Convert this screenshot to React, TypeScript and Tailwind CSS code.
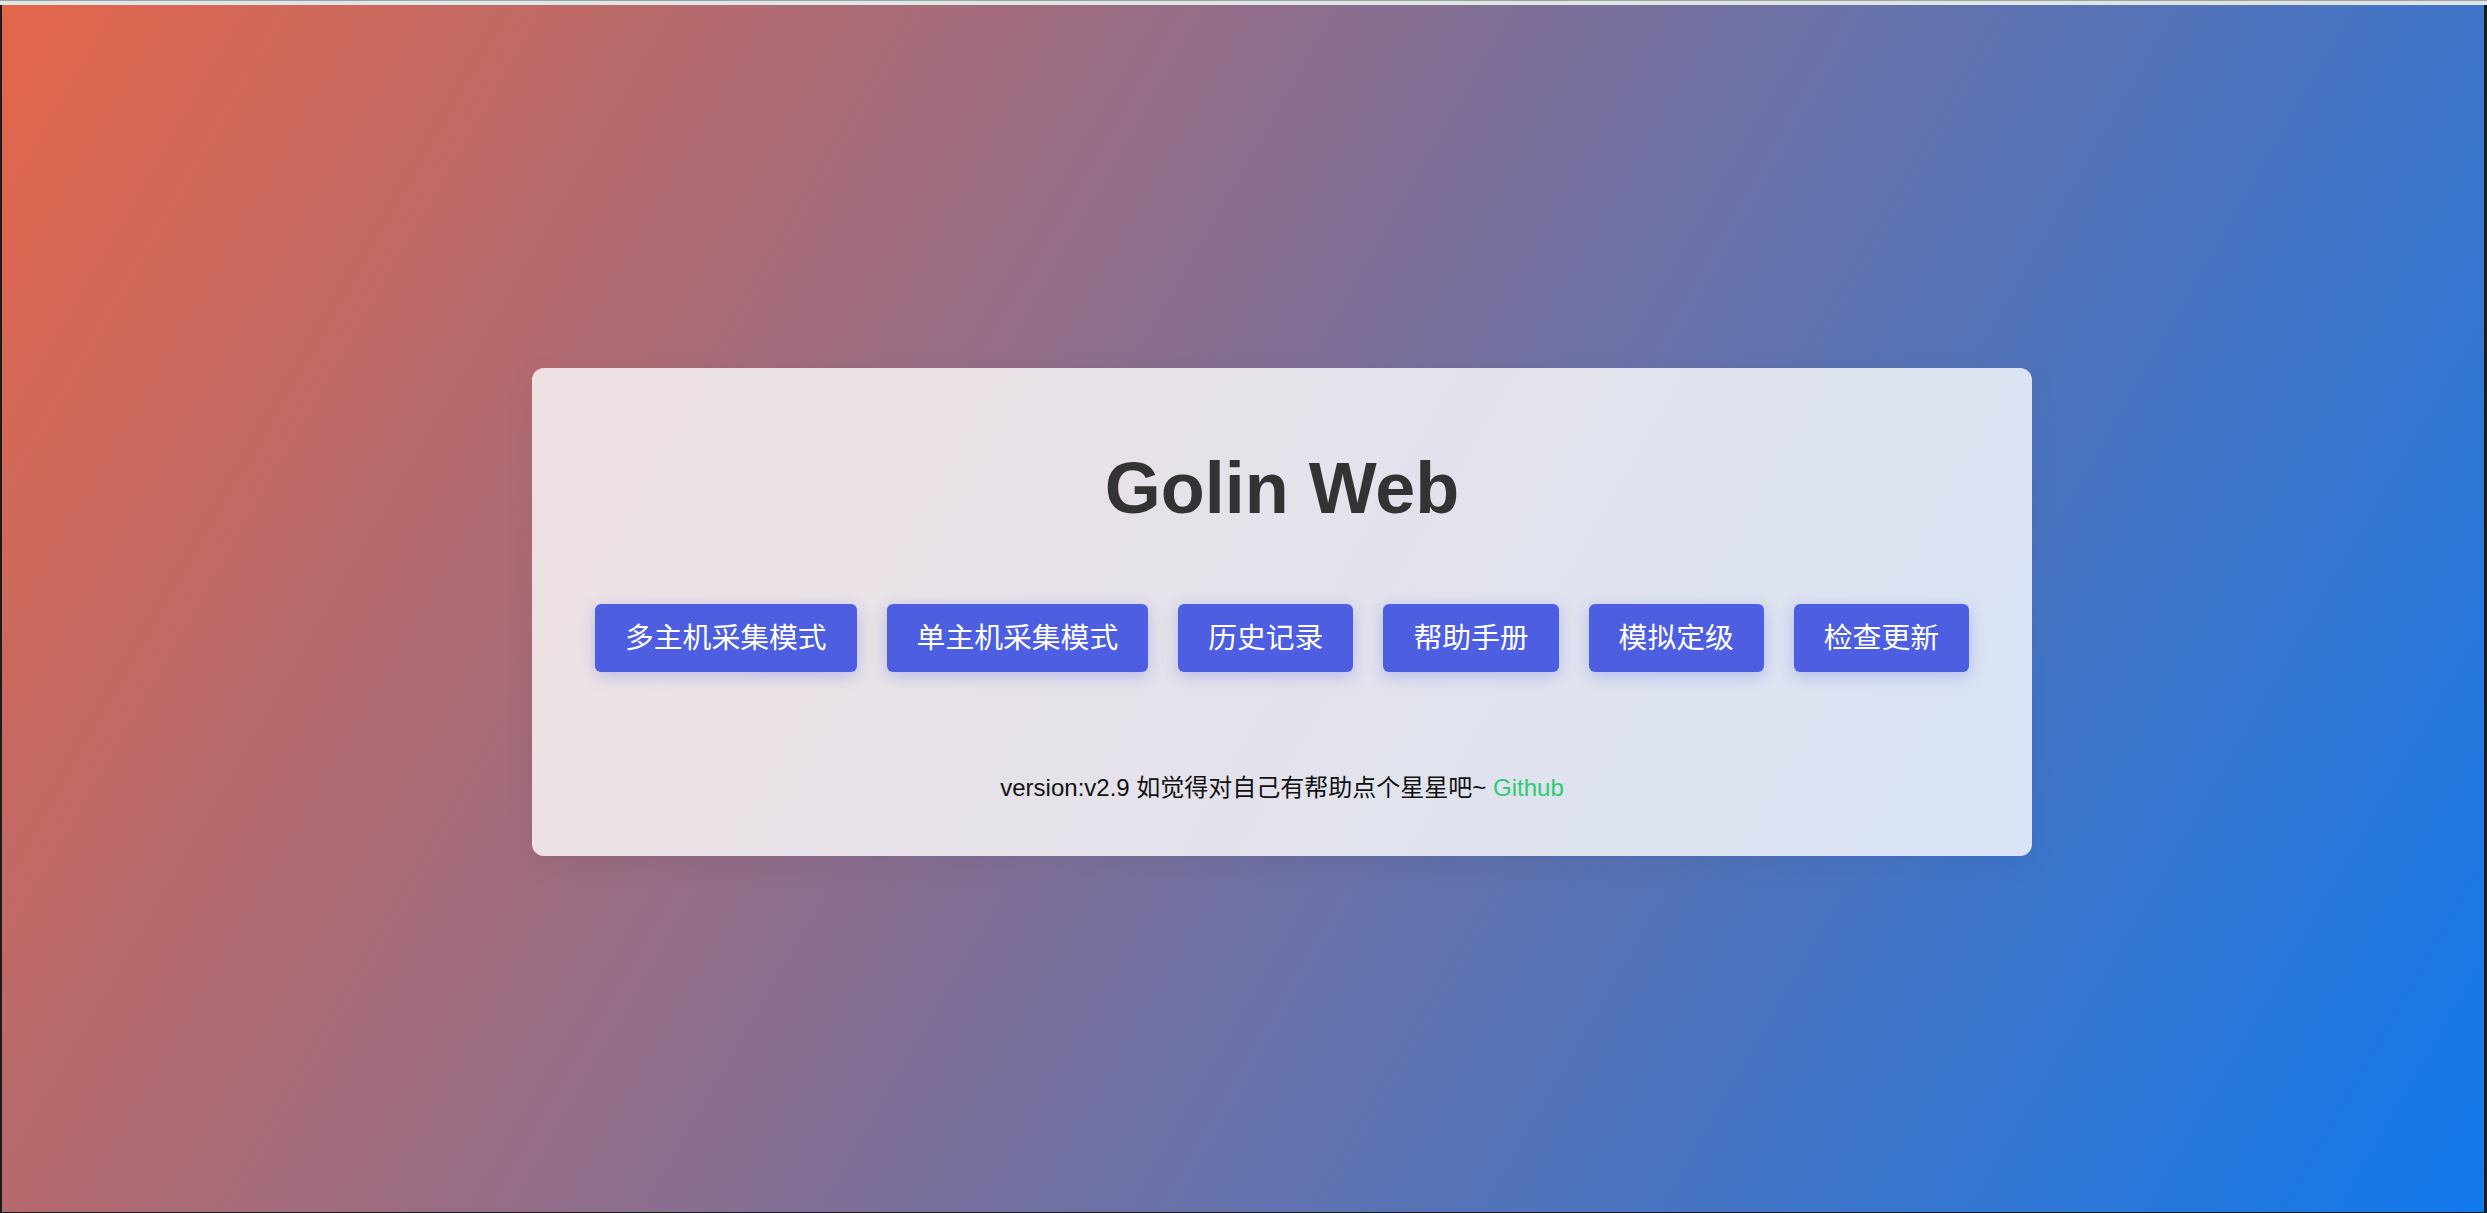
import React from "react";

const menu = ["多主机采集模式", "单主机采集模式", "历史记录", "帮助手册", "模拟定级", "检查更新"];

function App() {
  return (
    <div className="h-screen w-full flex flex-col bg-[#dfe4e4] font-['Liberation_Sans','Noto_Sans_CJK_SC',sans-serif]">
      <div className="h-[5px] border-t border-[#9ba3a3] bg-[#dfe5e5]" />
      <div className="flex-1 flex items-center justify-center pl-[78px] pt-[7px] border-l-2 border-r-[3px] border-b border-[#1c1c1c] bg-[linear-gradient(120deg,#e4664a_0%,#1179ec_100%)]">
        <div className="w-[1500px] flex flex-col items-center rounded-[12px] bg-white/80 pt-[84px] pb-[50px] shadow-[0_8px_32px_rgba(0,0,0,0.06)]">
          <h1 className="text-[72px] leading-none font-bold text-[#333333]">Golin Web</h1>
          <div className="mt-[80px] flex gap-[30px]">
            {menu.map((item) => (
              <button
                key={item}
                className="h-[68px] px-[30px] flex items-center rounded-[6px] bg-[#4d5fe0] text-white text-[28.8px] leading-none shadow-[0_4px_16px_rgba(77,95,224,0.3)]"
              >
                {item}
              </button>
            ))}
          </div>
          <p className="mt-[98px] text-[24px] leading-[36px] text-[#111111]">
            version:v2.9 如觉得对自己有帮助点个星星吧~ <a className="text-[#2ecc71]">Github</a>
          </p>
        </div>
      </div>
    </div>
  );
}

export default App;
